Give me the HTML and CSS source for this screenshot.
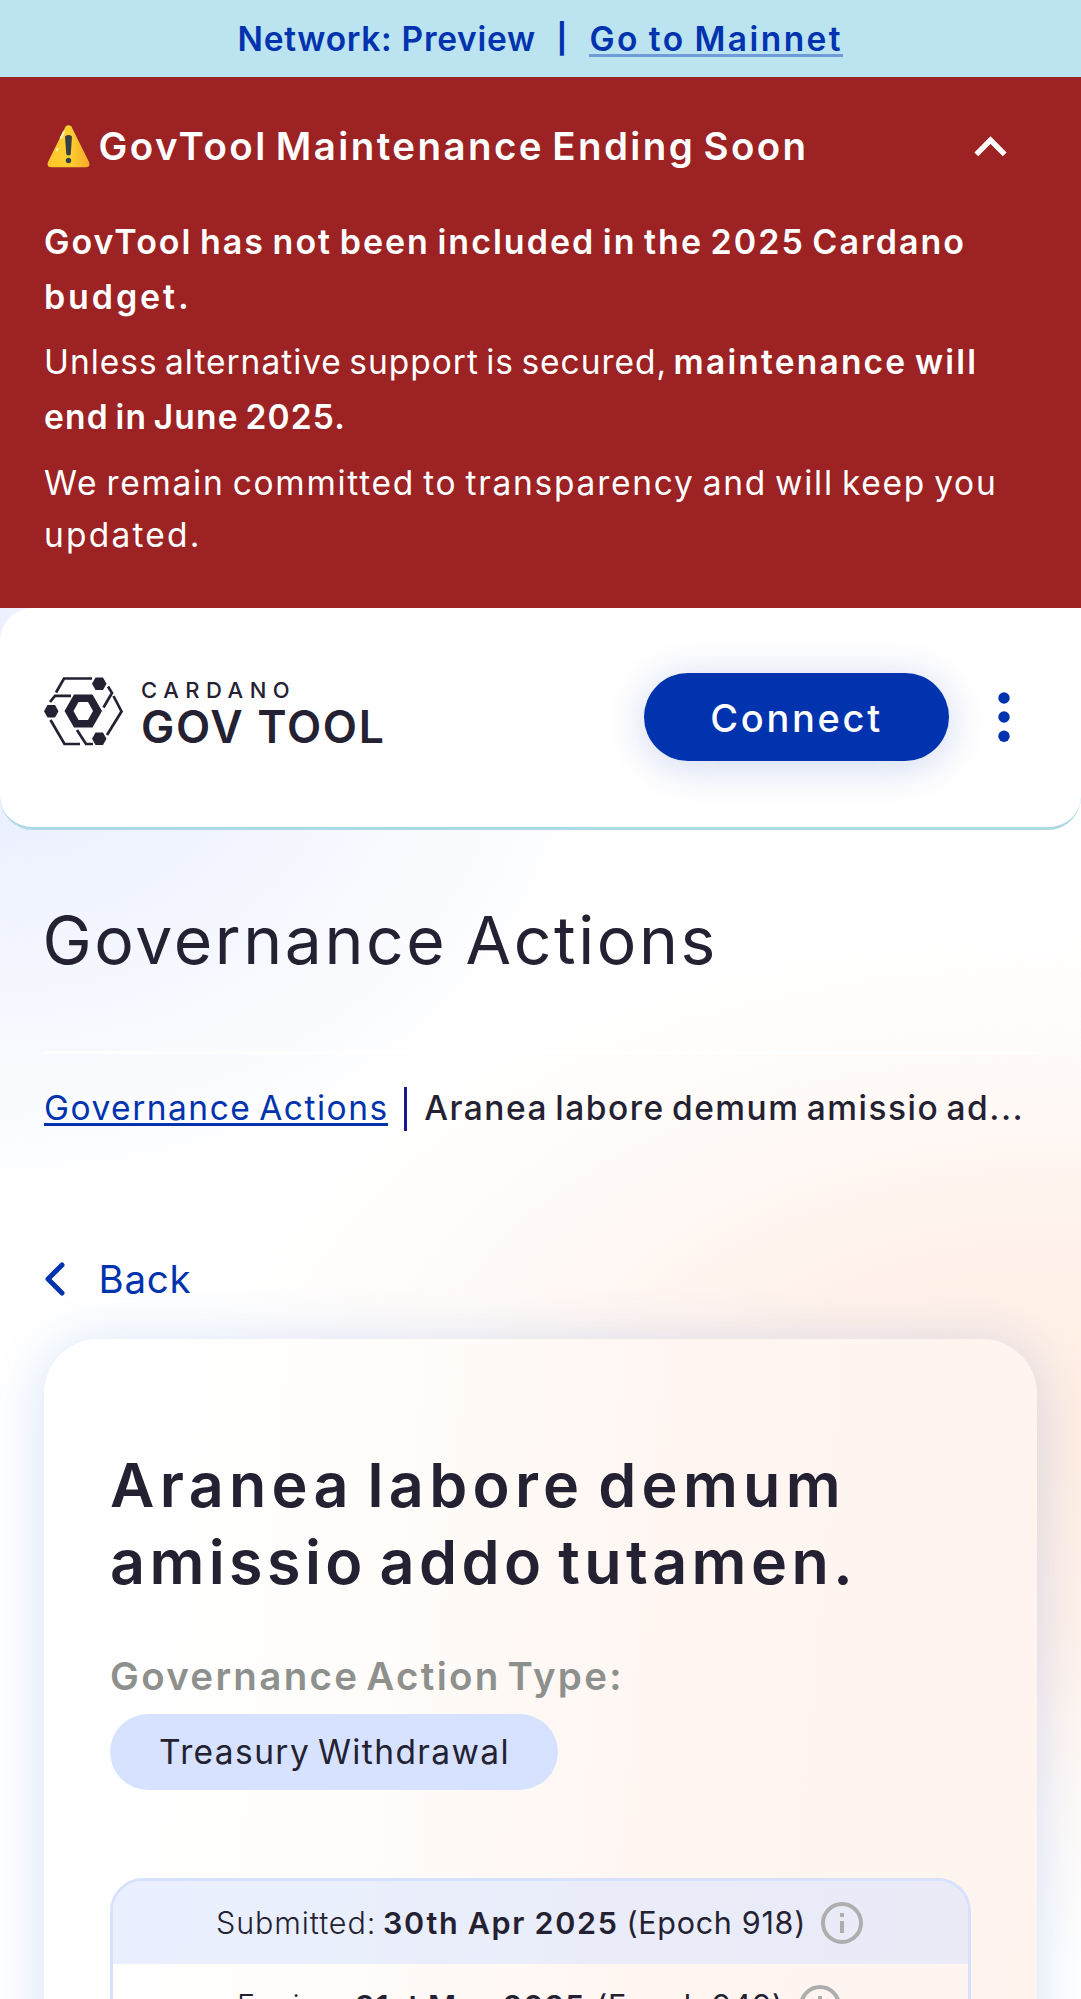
FILE: index.html
```
<!DOCTYPE html>
<html lang="en">
<head>
<meta charset="utf-8">
<title>GovTool</title>
<link rel="stylesheet" href="styles.css">
</head>
<body>
<div class="network"><span class="network-name">Network: Preview</span><span class="network-bar">|</span><a class="network-link">Go to Mainnet</a></div>

<section class="notice">
  <div class="notice-head">
    <svg class="warn" viewBox="0 0 43 43"><defs><linearGradient id="w" x1="0" y1="0" x2="1" y2="0"><stop offset="0" stop-color="#ffc42a"/><stop offset=".5" stop-color="#ffd032"/><stop offset="1" stop-color="#f5ab28"/></linearGradient></defs><path d="M18.6 1.6Q21.5-1.2 24.4 1.6L42 37Q43.5 42 39 42.3H4Q-.5 42 1 37Z" fill="url(#w)"/><path d="M18 11.500Q21.500 8.600 25 11.500L23.700 29.500Q21.500 31.500 19.300 29.500Z" fill="#363f45"/><circle cx="21.500" cy="35.500" r="2.700" fill="#363f45"/><path d="M14 13L17 7M10 25l.5-1" stroke="#fff0a5" stroke-width="2.500" stroke-linecap="round"/></svg>
    <h2>GovTool Maintenance Ending Soon</h2>
    <svg class="chevron-up" viewBox="0 0 33 21"><path d="M2.300 18.300L16.500 4.100L30.700 18.300" fill="none" stroke="#fff" stroke-width="5.400"/></svg>
  </div>
  <p class="p1">GovTool has not been included in the 2025 Cardano <span class="wide">budget.</span></p>
  <p class="p2"><span class="lead">Unless alternative support is secured,</span> <b class="maint">maintenance will</b> <b class="june">end in June 2025.</b></p>
  <p class="p3">We remain committed to transparency and will keep you <span class="upd">updated.</span></p>
</section>

<main class="page">
  <header class="header">
    <div class="logo">
      <svg class="mark" viewBox="0 0 79 69" fill="none" stroke="#242232" stroke-width="2.700">
        <path d="M12 15.500L20 1.500H48M6 25L11 18.800H27M59.500 30.500L68 16L64 9.500M69.500 19L77.500 34.500L63 58M6.500 43L20.500 67H36M33 53L42 67H49" />
        <path d="M30 17.500H48.500L58 34L48.500 50.500H30L20.500 34Z M34.500 25L29.500 34L34.500 43H44L49 34L44 25Z" fill="#242232" fill-rule="evenodd" stroke="none"/>
        <g fill="#242232" stroke="none"><path d="M51.500.5H59L62.500 6.700L59 13H51.500L48 6.700Z"/><path d="M3.500 28H11L14.500 34.300L11 40.500H3.500L0 34.300Z"/><path d="M51.500 55.500H59L62.500 61.700L59 68H51.500L48 61.700Z"/></g>
      </svg>
      <div class="logo-text"><span class="cardano">CARDANO</span><span class="govtool">GOV TOOL</span></div>
    </div>
    <button class="connect">Connect</button>
    <svg class="dots" viewBox="0 0 12 50" fill="#0033ad"><circle cx="6" cy="6" r="5.700"/><circle cx="6" cy="25" r="5.700"/><circle cx="6" cy="44.300" r="5.700"/></svg>
  </header>

  <h1 class="title">Governance Actions</h1>
  <nav class="crumbs"><a class="crumb-link">Governance Actions</a><i class="divider"></i><span class="crumb-here">Aranea labore demum amissio ad...</span></nav>
  <a class="back"><svg viewBox="0 0 21 34"><path d="M18 3L4 17L18 31" fill="none" stroke="#0033ad" stroke-width="5" stroke-linecap="round" stroke-linejoin="round"/></svg>Back</a>

  <article class="card">
    <h2 class="card-title"><span class="t1">Aranea labore demum</span> <span class="t2">amissio addo tutamen.</span></h2>
    <div class="type-label">Governance Action Type:</div>
    <div class="pill">Treasury Withdrawal</div>
    <div class="dates">
      <div class="date shaded"><span class="k">Submitted:</span><b>30th Apr 2025</b><span class="e">(Epoch 918)</span><svg class="info" viewBox="0 0 42 42"><circle cx="21" cy="21" r="19" fill="none" stroke="#adaead" stroke-width="4"/><path d="M21 19V31M21 11V15" stroke="#adaead" stroke-width="4"/></svg></div>
      <div class="date second"><span class="k">Expires:</span><b>31st May 2025</b><span class="e">(Epoch 949)</span><svg class="info" viewBox="0 0 42 42"><circle cx="21" cy="21" r="19" fill="none" stroke="#adaead" stroke-width="4"/><path d="M21 19V31M21 11V15" stroke="#adaead" stroke-width="4"/></svg></div>
    </div>
  </article>
</main>
</body>
</html>
```
FILE: styles.css
```
* { box-sizing: border-box; }
body {
  margin: 0;
  height: 1999px;
  overflow: hidden;
  font-family: Inter, "Open Sans", sans-serif;
  font-size: 33.5px;
  color: #242232;
  background: #fff;
}
h1, h2, p { margin: 0; }
svg { display: block; flex: none; }

.network {
  height: 77px;
  display: flex;
  align-items: center;
  background: #bbe3f0;
  color: #0033ad;
  font-weight: 600;
  line-height: 40px;
  padding-left: 237.5px;
  white-space: nowrap;
}
.network-name { width: 319px; letter-spacing: .71px; }
.network-bar { width: 32px; font-size: 29px; font-weight: 700; line-height: 38px; }
.network-link {
  height: 36px;
  line-height: 37px;
  padding-left: 1px;
  letter-spacing: 2.45px;
  word-spacing: -2px;
  border-bottom: 3px solid #709bd8;
}

.notice {
  height: 530.5px;
  background: #9c2224;
  color: #fff;
  padding: 42px 44px 0;
}
.notice-head { display: flex; align-items: center; height: 55px; margin-bottom: 39.5px; }
.warn { width: 43px; height: 43px; margin-left: 2.5px; }
.notice-head h2 {
  flex: 1;
  margin-left: 9px;
  font-size: 38.5px;
  font-weight: 600;
  letter-spacing: 2.42px;
  word-spacing: -4px;
  line-height: 55px;
  white-space: nowrap;
}
.chevron-up { width: 33px; height: 21px; margin-right: 30.5px; }
.notice p { line-height: 55px; word-spacing: -3px; }
.notice .p1 { font-size: 34px; font-weight: 600; letter-spacing: 2px; margin-bottom: 11.5px; width: 960px; }
.wide { letter-spacing: 2.9px; }
.notice .p2 { line-height: 55px; margin-bottom: 11.5px; width: 980px; }
.lead { letter-spacing: .98px; }
.p2 b { font-weight: 600; }
.maint { letter-spacing: 2.2px; }
.june { letter-spacing: 1.2px; }
.notice .p3 { line-height: 52px; letter-spacing: 1.73px; }
.upd { letter-spacing: 2.2px; }

.page {
  height: 1391.5px;
  background:
    radial-gradient(ellipse 620px 480px at 0 120px, rgba(226,233,255,.85), rgba(226,233,255,.42) 45%, rgba(226,233,255,0) 100%),
    radial-gradient(ellipse 860px 520px at 1040px 830px, #ffeee2 0, #fff1e9 35%, #fffaf7 68%, rgba(255,255,255,0) 100%),
    #fff;
}
.header {
  height: 222px;
  display: flex;
  align-items: center;
  background: #fff;
  border-bottom: 3px solid #add8e6;
  border-radius: 33px;
  padding: 0 71px 0 44px;
}
.logo { display: flex; height: 69px; margin-top: -12px; gap: 19px; }
.mark { width: 79px; height: 69px; }
.logo-text { display: flex; flex-direction: column; white-space: nowrap; }
.cardano { font-size: 22px; font-weight: 500; letter-spacing: 6.5px; line-height: 24px; padding-top: 1px; margin-left: -1px; }
.govtool { font-size: 44.5px; font-weight: 600; letter-spacing: 1.7px; line-height: 44px; margin-top: 3px; margin-left: -1px; }
.connect {
  margin-left: auto;
  width: 305px;
  height: 88.5px;
  border: 0;
  border-radius: 45px;
  background: #0033ad;
  color: #fff;
  font: 500 38px Inter, sans-serif;
  letter-spacing: 2.7px;
  padding-top: 2px;
  box-shadow: 0 5px 40px rgba(0,51,173,.2);
}
.dots { width: 12px; height: 50px; margin-left: 49px; }

.title {
  font-size: 66px;
  font-weight: 400;
  letter-spacing: 2.6px;
  word-spacing: -3px;
  line-height: 90px;
  padding: 65px 44px 66px 42.5px;
  white-space: nowrap;
}
.crumbs {
  margin: 0 44px;
  border-top: 3px solid #fff;
  padding-top: 33px;
  display: flex;
  height: 82px;
  white-space: nowrap;
}
.crumb-link {
  width: 343.5px;
  height: 39px;
  line-height: 42px;
  color: #0033ad;
  letter-spacing: 1.5px;
  word-spacing: -3px;
  border-bottom: 3px solid #0033ad;
}
.divider { width: 2.75px; height: 44px; background: #1b1792; margin: 0 17.5px 0 16.5px; }
.crumb-here { line-height: 42px; font-weight: 500; letter-spacing: 1.48px; word-spacing: -3px; }
.back {
  display: flex;
  align-items: center;
  height: 50px;
  margin: 121.5px 44px 0;
  color: #0033ad;
  font-size: 38.5px;
  letter-spacing: .7px;
}
.back svg { width: 21px; height: 34px; margin-right: 33.5px; }

.card {
  margin: 34.5px 44px 0;
  height: 760px;
  border-radius: 55px;
  background: linear-gradient(95deg, #fff 12%, #fffcf9 35%, #fff6f2 60%, #fff4ee);
  box-shadow: 0 5px 55px rgba(47,98,220,.2);
  padding: 108.5px 66px 0;
}
.card-title { font-size: 61px; font-weight: 600; line-height: 77px; word-spacing: -7px; white-space: nowrap; }
.card-title span { display: block; }
.t1 { letter-spacing: 5.3px; }
.t2 { letter-spacing: 4.4px; }
.type-label {
  margin-top: 50px;
  font-size: 38.5px;
  font-weight: 600;
  letter-spacing: 2.3px;
  word-spacing: -5px;
  line-height: 50px;
  color: #8e908e;
  white-space: nowrap;
}
.pill {
  width: 448px;
  height: 76.5px;
  margin-top: 12.5px;
  border-radius: 39px;
  background: #d6e2ff;
  padding-left: 49px;
  line-height: 76px;
  letter-spacing: 1.4px;
  word-spacing: -3px;
  white-space: nowrap;
}
.dates { margin-top: 88px; height: 300px; border: 3px solid #d6e2ff; border-radius: 33px; overflow: hidden; }
.date { display: flex; align-items: center; height: 83px; padding-left: 103px; font-size: 30.5px; white-space: nowrap; }
.shaded { background: rgba(214,226,255,.5); }
.date .k { width: 167px; font-weight: 300; letter-spacing: .9px; }
.date b { width: 243.5px; font-weight: 600; letter-spacing: 1.7px; word-spacing: -1px; }
.date .e { width: 194px; letter-spacing: .7px; }
.info { width: 42px; height: 42px; }
.date.second { padding-left: 124px; }
.second .k { width: 118px; }
.second b { width: 241px; letter-spacing: 1.3px; }
.second .e { width: 203px; letter-spacing: .8px; }
```
